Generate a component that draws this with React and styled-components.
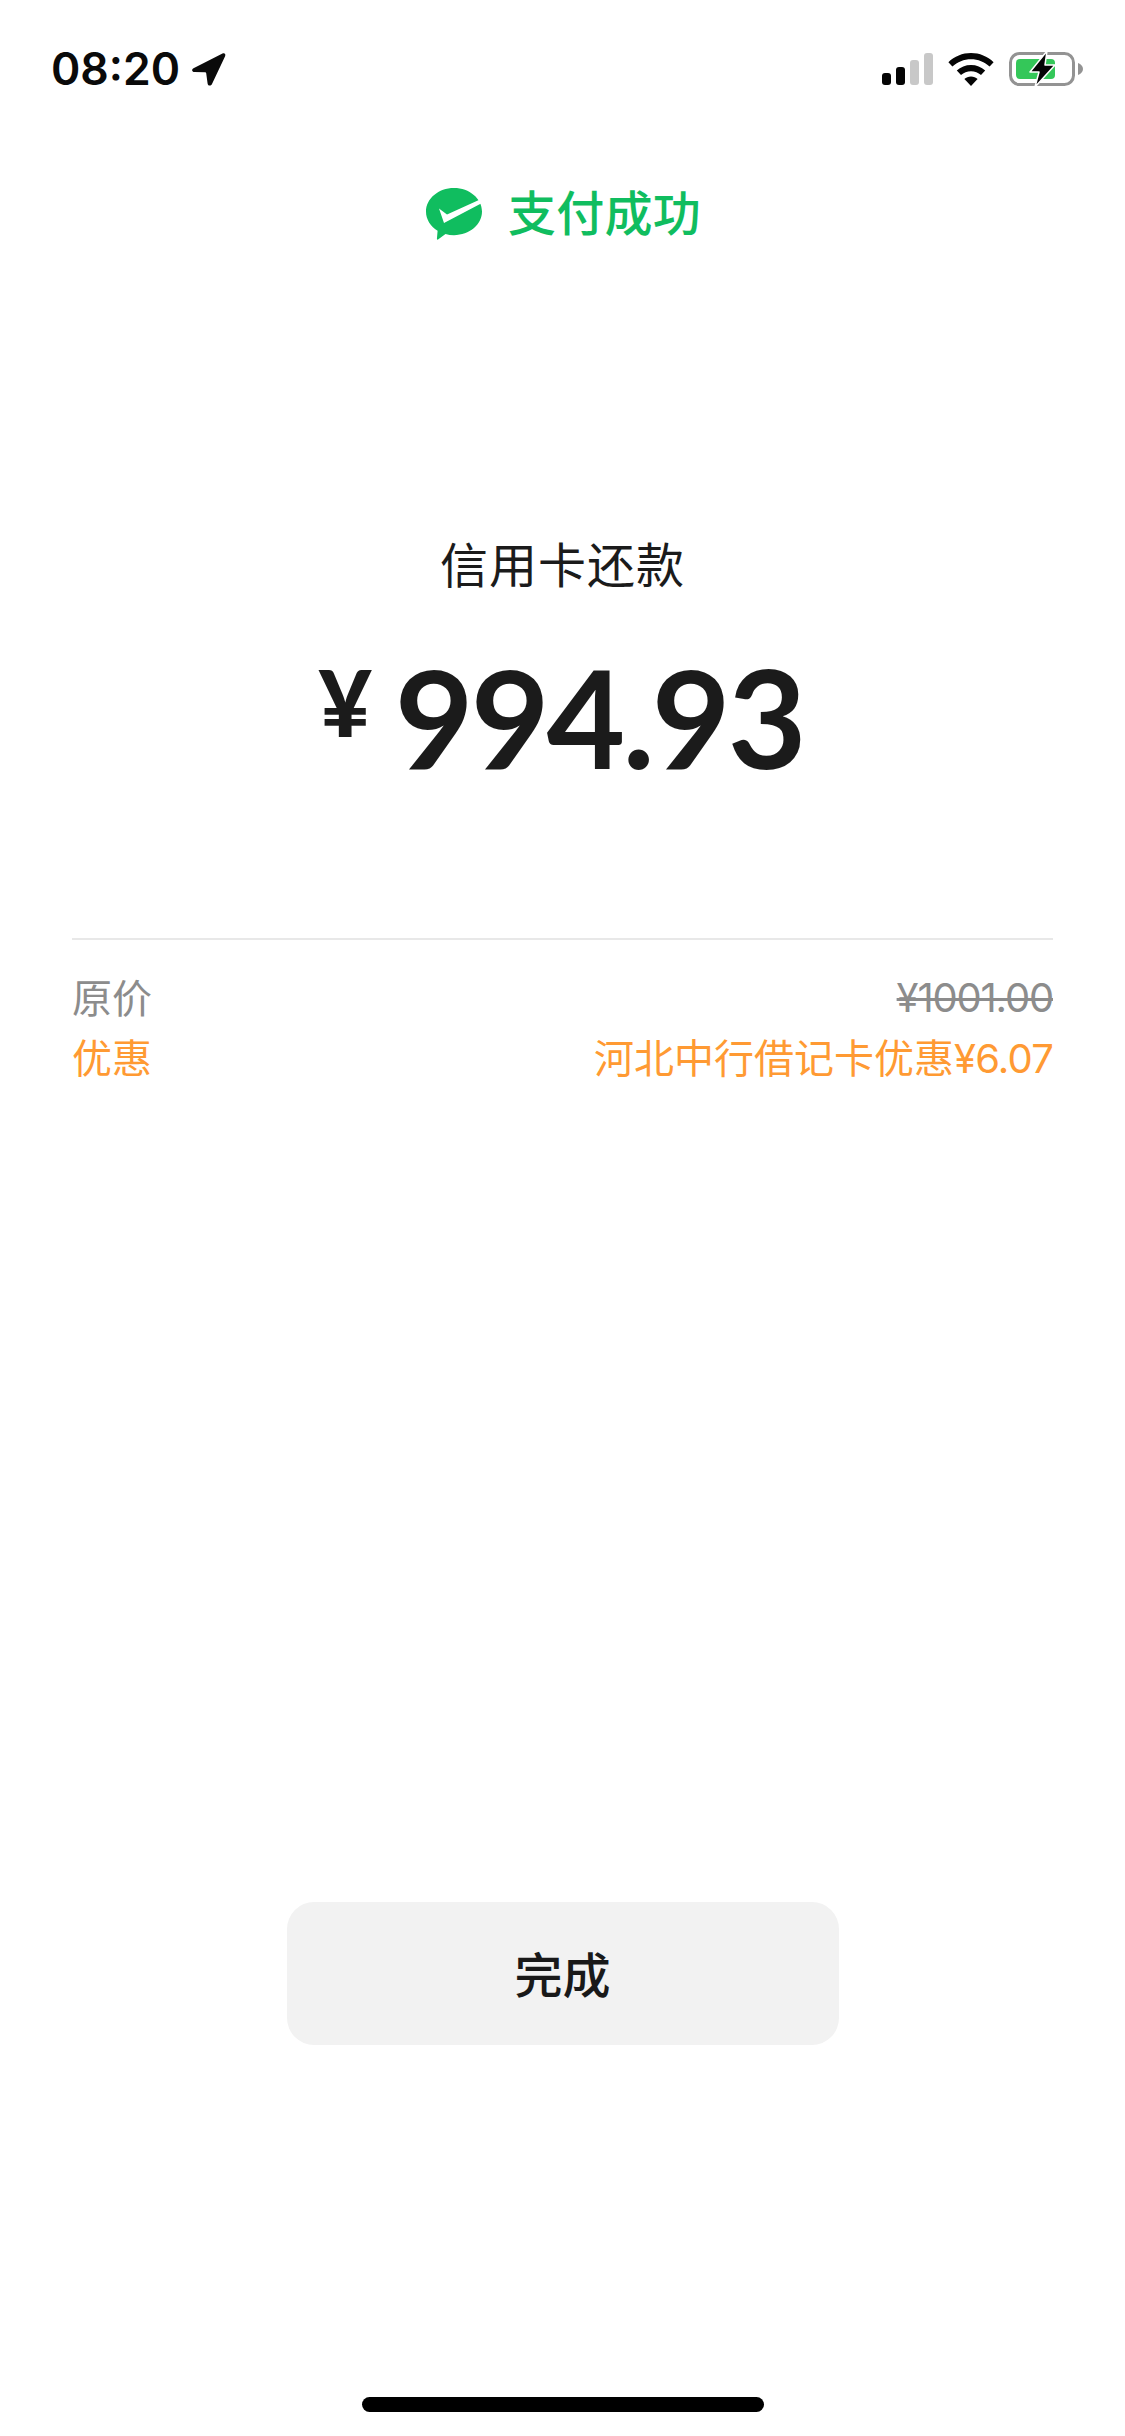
import React from "react";
import styled, { createGlobalStyle } from "styled-components";

const GlobalStyle = createGlobalStyle`
  html, body {
    margin: 0;
    padding: 0;
    background: #fff;
  }
  * {
    box-sizing: border-box;
  }
`;

const CJK = `Inter, "Noto Sans CJK SC", sans-serif`;

const LocationIcon = () => (
  <StLocation viewBox="0 0 36 36">
    <path
      d="M2.5 17.2 L31.5 2.6 C33.4 1.7 35 3.3 34.1 5.2 L21 33 C19.8 35.4 17 35 16.6 32.4 L15.2 22.2 C15.1 21.6 14.8 21.3 14.2 21.2 L3.4 21 C0.8 20.9 0.4 18.3 2.5 17.2 Z"
      fill="#0a0a0a"
    />
  </StLocation>
);

const SignalIcon = () => (
  <StSignal viewBox="0 0 51 32">
    <rect x="0" y="20" width="9" height="12" rx="3" fill="#050505" />
    <rect x="14" y="14" width="9" height="18" rx="3" fill="#050505" />
    <rect x="28" y="7" width="9" height="25" rx="3" fill="#c8c8c8" />
    <rect x="42" y="0" width="9" height="32" rx="3" fill="#c8c8c8" />
  </StSignal>
);

const WifiIcon = () => (
  <StWifi viewBox="0 0 46 33">
    <path
      d="M23 0 C31.5 0 39.5 3.3 45.6 9.2 L41.6 13.6 C36.6 8.8 30 6.2 23 6.2 C16 6.2 9.4 8.8 4.4 13.6 L0.4 9.2 C6.5 3.3 14.5 0 23 0 Z"
      fill="#050505"
    />
    <path
      d="M23 12 C28.4 12 33.4 14 37.2 17.6 L33 22.1 C30.3 19.6 26.8 18.2 23 18.2 C19.2 18.2 15.7 19.6 13 22.1 L8.8 17.6 C12.6 14 17.6 12 23 12 Z"
      fill="#050505"
    />
    <path
      d="M23 23.6 C25.6 23.6 27.9 24.5 29.6 26 L23 33 L16.4 26 C18.1 24.5 20.4 23.6 23 23.6 Z"
      fill="#050505"
    />
  </StWifi>
);

const BatteryIcon = () => (
  <StBattery viewBox="0 0 74 36">
    <rect x="1.5" y="2.5" width="63" height="31" rx="9" fill="#fff" stroke="#939393" strokeWidth="3" />
    <rect x="7" y="8" width="39" height="20" rx="4" fill="#34c759" />
    <path d="M69 12 C72 13 74 15.4 74 18 C74 20.6 72 23 69 24 Z" fill="#939393" />
    <path
      d="M38 0 L21 21 L30 21 L26 36 L46 14 L36 14 Z"
      fill="#050505"
      stroke="#fff"
      strokeWidth="1.5"
      strokeLinejoin="round"
    />
  </StBattery>
);

const PayLogo = () => (
  <StLogo viewBox="0 0 56 52">
    <path
      d="M28 0 C43.5 0 56 10.6 56 23.6 C56 36.6 43.5 47.2 28 47.2 C25 47.2 22.2 46.8 19.5 46 L12 51.6 C11.4 52 10.8 51.6 10.9 50.9 L11.6 42.8 C4.4 38.4 0 31.4 0 23.6 C0 10.6 12.5 0 28 0 Z"
      fill="#10bd5f"
    />
    <path d="M13 20.5 L21 26.6 L54 11.5 L56 15 L18 35 Z" fill="#fff" />
  </StLogo>
);

const App = () => {
  return (
    <>
      <GlobalStyle />
      <StPage>
        <StStatusBar>
          <StTimeBox>
            <StTime>08:20</StTime>
            <LocationIcon />
          </StTimeBox>
          <StStatusIcons>
            <SignalIcon />
            <WifiIcon />
            <BatteryIcon />
          </StStatusIcons>
        </StStatusBar>

        <StResult>
          <PayLogo />
          <StResultText>支付成功</StResultText>
        </StResult>

        <StMerchant>信用卡还款</StMerchant>

        <StAmount>
          <StYen>¥</StYen>
          <StValue>994.93</StValue>
        </StAmount>

        <StDetail>
          <StRow color="#8c8c8c">
            <span>原价</span>
            <StOldPrice>¥1001.00</StOldPrice>
          </StRow>
          <StRow color="#ff9a33">
            <span>优惠</span>
            <span>
              河北中行借记卡优惠<StPrice>¥6.07</StPrice>
            </span>
          </StRow>
        </StDetail>

        <StDoneButton>完成</StDoneButton>

        <StHomeBar />
      </StPage>
    </>
  );
};

export default App;

const StPage = styled.div`
  width: 1125px;
  height: 2436px;
  display: flex;
  flex-direction: column;
  align-items: center;
  background: #fff;
  color: #1b1b1b;
  font-family: ${CJK};
  overflow: hidden;
`;

const StStatusBar = styled.div`
  width: 100%;
  height: 52px;
  margin-top: 43px;
  padding: 0 42px 0 51px;
  display: flex;
  justify-content: space-between;
  align-items: center;
`;

const StTimeBox = styled.div`
  display: flex;
  align-items: center;
  gap: 11px;
`;

const StTime = styled.div`
  font-size: 44.5px;
  font-weight: 600;
  line-height: 52px;
  color: #0a0a0a;
`;

const StLocation = styled.svg`
  width: 36px;
  height: 36px;
`;

const StStatusIcons = styled.div`
  display: flex;
  align-items: center;
  gap: 15px;
`;

const StSignal = styled.svg`
  width: 51px;
  height: 32px;
`;

const StWifi = styled.svg`
  width: 46px;
  height: 33px;
`;

const StBattery = styled.svg`
  width: 74px;
  height: 36px;
`;

const StResult = styled.div`
  margin-top: 93px;
  padding-left: 2px;
  display: flex;
  align-items: center;
  gap: 26px;
`;

const StLogo = styled.svg`
  width: 56px;
  height: 52px;
`;

const StResultText = styled.div`
  font-size: 48px;
  line-height: 52px;
  font-weight: 500;
  letter-spacing: 0.3px;
  color: #10bd5f;
`;

const StMerchant = styled.div`
  margin-top: 294px;
  font-size: 48px;
  line-height: 64px;
  font-weight: 400;
  letter-spacing: 1px;
`;

const StAmount = styled.div`
  margin-top: 39px;
  padding-right: 3px;
  display: flex;
  align-items: flex-start;
  gap: 23px;
  height: 160px;
`;

const StYen = styled.div`
  font-family: Lato, sans-serif;
  font-size: 92px;
  font-weight: 900;
  line-height: 120px;
  margin-top: 5px;
`;

const StValue = styled.div`
  font-family: Lato, sans-serif;
  font-size: 136px;
  font-weight: 700;
  line-height: 160px;
  letter-spacing: -3px;
`;

const StDetail = styled.div`
  width: 981px;
  margin-top: 141px;
  padding-top: 26px;
  border-top: 2px solid #e8e8e8;
  display: flex;
  flex-direction: column;
`;

const StRow = styled.div`
  height: 60px;
  display: flex;
  justify-content: space-between;
  align-items: center;
  font-size: 40px;
  color: ${(p) => p.color};
`;

const StOldPrice = styled.span`
  padding-top: 3px;
  letter-spacing: -1.2px;
  text-decoration: line-through;
  text-decoration-thickness: 3px;
`;

const StPrice = styled.span`
  letter-spacing: -0.8px;
`;

const StDoneButton = styled.div`
  width: 552px;
  height: 143px;
  margin-top: auto;
  padding-bottom: 4px;
  background: #f2f2f2;
  border-radius: 27px;
  display: flex;
  align-items: center;
  justify-content: center;
  font-size: 48px;
  font-weight: 500;
  color: #191919;
`;

const StHomeBar = styled.div`
  width: 402px;
  height: 15px;
  margin-top: 352px;
  margin-bottom: 24px;
  border-radius: 8px;
  background: #000;
`;
